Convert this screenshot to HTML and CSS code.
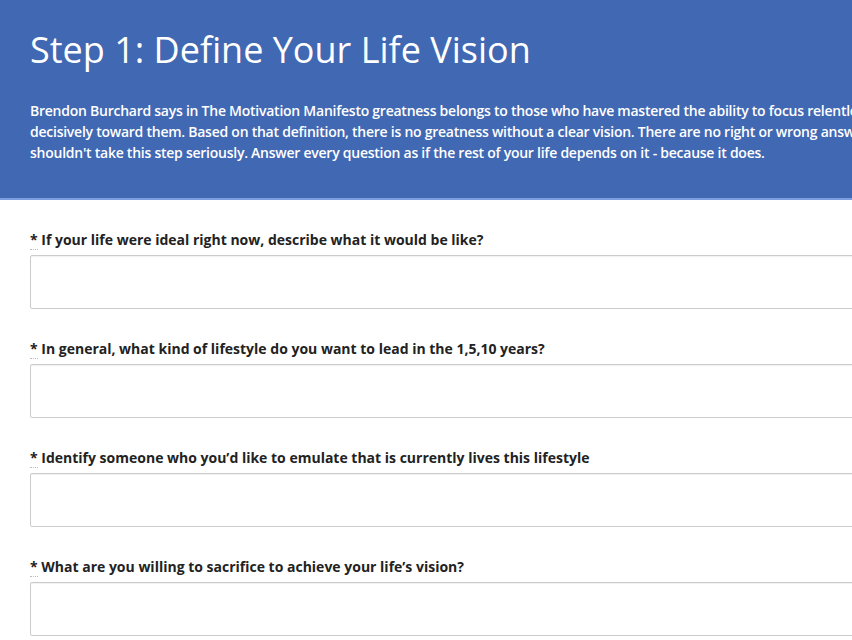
FILE: index.html
```html
<!DOCTYPE html>
<html lang="en">
<head>
<meta charset="utf-8">
<title>Step 1: Define Your Life Vision</title>
<link rel="stylesheet" href="styles.css">
</head>
<body>
<div class="page">
  <header class="hero">
    <h1 class="hero-title">Step 1: Define Your Life Vision</h1>
    <p class="hero-text">Brendon Burchard says in The Motivation Manifesto greatness belongs to those who have mastered the ability to focus relentlessly on their goals and move<br>decisively toward them. Based on that definition, there is no greatness without a clear vision. There are no right or wrong answers here, but that doesn't mean you<br>shouldn't take this step seriously. Answer every question as if the rest of your life depends on it - because it does.</p>
  </header>
  <form class="form">
    <div class="field">
      <label class="field-label"><abbr class="req" title="required">*</abbr> If your life were ideal right now, describe what it would be like?</label>
      <input class="field-input" type="text">
    </div>
    <div class="field">
      <label class="field-label"><abbr class="req" title="required">*</abbr> In general, what kind of lifestyle do you want to lead in the 1,5,10 years?</label>
      <input class="field-input" type="text">
    </div>
    <div class="field">
      <label class="field-label"><abbr class="req" title="required">*</abbr> Identify someone who you’d like to emulate that is currently lives this lifestyle</label>
      <input class="field-input" type="text">
    </div>
    <div class="field">
      <label class="field-label"><abbr class="req" title="required">*</abbr> What are you willing to sacrifice to achieve your life’s vision?</label>
      <input class="field-input" type="text">
    </div>
  </form>
</div>
</body>
</html>
```
FILE: styles.css
```css
html, body {
  margin: 0;
  padding: 0;
  overflow: hidden;
  background: #ffffff;
}
body {
  font-family: "Open Sans", "DejaVu Sans", sans-serif;
  color: #222222;
}
.page {
  width: 1200px;
}
.hero {
  background: #4168b3;
  border-bottom: 2px solid #7a9ee0;
  height: 200px;
  box-sizing: border-box;
  padding: 27px 30px 0 30px;
  color: #ffffff;
}
.hero-title {
  margin: 0;
  font-size: 36px;
  font-weight: 400;
  line-height: 46px;
  letter-spacing: 0;
}
.hero-text {
  margin: 27px 0 0 0;
  font-size: 14px;
  font-weight: 600;
  line-height: 21px;
  letter-spacing: -0.25px;
  white-space: nowrap;
}
.form {
  padding: 30px 0 0 30px;
}
.field {
  margin-bottom: 30px;
}
.field-label {
  display: block;
  font-size: 14px;
  font-weight: 700;
  line-height: 20px;
  margin-bottom: 5px;
  color: #222222;
}
.req {
  text-decoration: none;
  border-bottom: 1px dotted #bbbbbb;
}
.field-input {
  display: block;
  box-sizing: border-box;
  width: 1000px;
  height: 54px;
  border: 1px solid #cccccc;
  border-radius: 2px;
  box-shadow: inset 0 1px 1px rgba(0,0,0,0.06);
  background: #ffffff;
  margin: 0;
  padding: 6px 10px;
  font-family: inherit;
  font-size: 14px;
}
```
